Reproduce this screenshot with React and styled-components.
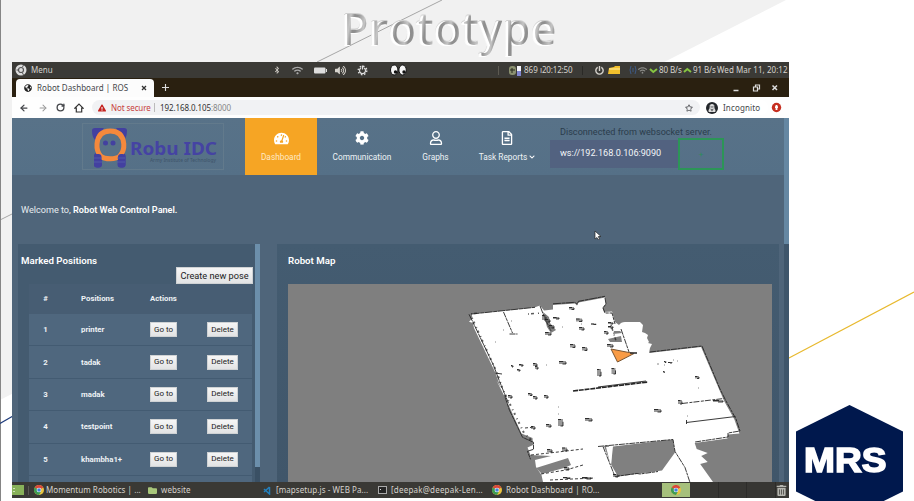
import React from "react";
import styled, { createGlobalStyle } from "styled-components";
import {
  FaTachometerAlt, FaCog, FaRegUser, FaRegFileAlt, FaChevronDown, FaChevronUp,
  FaBluetoothB, FaWifi, FaVolumeUp, FaPowerOff, FaFolder, FaGlobeAmericas,
  FaExclamationTriangle, FaUserSecret, FaTrashAlt, FaRegStar,
} from "react-icons/fa";
import { ArrowLeft, ArrowRight, RotateCw, House } from "lucide-react";

const Global = createGlobalStyle`
  html, body { margin: 0; width: 914px; height: 501px; overflow: hidden; background: #fff; }
  * { box-sizing: border-box; }
`;

const Slide = styled.main`
  position: relative;
  width: 914px;
  height: 501px;
  overflow: hidden;
  font-family: Roboto, sans-serif;
`;
const Backdrop = styled.svg`
  position: absolute;
  inset: 0;
`;
const SlideTitle = styled.h1`
  position: relative;
  margin: 0 0 0 343px;
  height: 62px;
  font: 400 44.5px/56px "Open Sans", sans-serif;
  letter-spacing: 2.5px;
  white-space: nowrap;
  width: max-content;
  transform: scaleX(${(p) => p.$stretch});
  transform-origin: left;
  color: transparent;
  background: repeating-linear-gradient(100deg, #8f8f8f 0 3px, #adadad 7px, #c6c6c6 11px, #8f8f8f 15px);
  background-clip: text;
  -webkit-background-clip: text;
  filter: drop-shadow(-1.5px 0 0 #fff) drop-shadow(-0.5px 1px 0.5px #fff) drop-shadow(0.7px -0.3px 0 #cfcfcf);
`;
const Screen = styled.section`
  position: relative;
  width: 777px;
  height: 436px;
  margin-left: 12px;
  display: flex;
  flex-direction: column;
  overflow: hidden;
  background: #4f657a;
`;

/* Desktop chrome */
const Bar = styled.div`
  display: flex;
  align-items: center;
  flex: none;
  height: ${(p) => p.$h}px;
  background: ${(p) => p.$bg};
  color: ${(p) => p.$color || "#d6d3cd"};
  font: 400 8px/1 "Noto Sans", sans-serif;
  padding-left: ${(p) => p.$pad || 0}px;
`;
const Slot = styled.span`
  display: flex;
  align-items: center;
  flex: none;
  width: ${(p) => p.$w}px;
  height: 100%;
  white-space: nowrap;
  letter-spacing: ${(p) => p.$ls || 0}px;
  color: ${(p) => p.$color || "inherit"};
`;
const Tab = styled.div`
  display: flex;
  align-items: center;
  align-self: flex-end;
  width: 138px;
  height: 18px;
  padding-left: 8px;
  border-radius: 4px 4px 0 0;
  background: #fcfcfc;
  color: #44464a;
`;
const AddressBar = styled.div`
  display: flex;
  align-items: center;
  width: 608px;
  height: 15px;
  padding-left: 6px;
  border-radius: 8px;
  background: #f1f2f4;
`;
const Divider = styled.i`
  flex: none;
  width: 1px;
  height: 9px;
  margin-right: ${(p) => p.$mr || 0}px;
  background: ${(p) => p.$color || "#bbb"};
`;
const IncognitoChip = styled.div`
  display: flex;
  align-items: center;
  width: 65px;
  height: 15px;
  margin-left: 3px;
  padding-left: 3px;
  gap: 5px;
  border-radius: 8px;
  background: #fff;
  color: #44464a;
  letter-spacing: 0.15px;
`;
const Disc = styled.span`
  display: grid;
  place-items: center;
  flex: none;
  width: ${(p) => p.$size}px;
  height: ${(p) => p.$size}px;
  border-radius: 50%;
  background: ${(p) => p.$bg};
  color: #ddd;
`;
const Workspace = styled.span`
  display: grid;
  place-items: center;
  flex: none;
  width: 28px;
  height: 14px;
  background: #a6c07c;
`;
const Cell = styled.span`
  flex: none;
  width: 28.6px;
  height: 16px;
  border-right: 1px solid #2c2b29;
  background: #373633;
`;

/* Web page */
const Viewport = styled.div`
  display: flex;
  height: 364px;
  flex: none;
`;
const Page = styled.div`
  width: 772px;
`;
const PageScroll = styled.div`
  width: 5px;
  background: linear-gradient(#6587a2 126px, #3f566b 126px);
`;
const Header = styled.header`
  display: flex;
  height: 57px;
  padding-left: 70px;
  background: linear-gradient(#587288, #557087);
`;
const Brand = styled.div`
  width: 142px;
  height: 47px;
  margin: 5px 21px 0 0;
  border: 1px solid #627a8c;
`;
const NavItem = styled.a`
  display: flex;
  flex-direction: column;
  align-items: center;
  width: ${(p) => p.$w}px;
  padding-top: 13px;
  background: ${(p) => (p.$active ? "#f6a524" : "transparent")};
  color: ${(p) => (p.$active ? "#ffe9c4" : "#eef3f6")};
  font-size: 8.3px;
  line-height: 12px;
  gap: ${(p) => (p.$active ? 5 : 6)}px;
  white-space: nowrap;
  svg { color: #fff; flex: none; }
`;
const NavLabel = styled.span`
  display: flex;
  align-items: center;
  gap: 2px;
`;
const Socket = styled.div`
  width: 180px;
  padding-top: 8px;
`;
const SocketStatus = styled.div`
  padding-left: 10px;
  font-size: 9.1px;
  line-height: 12px;
  color: #2b3d4c;
  white-space: nowrap;
`;
const SocketRow = styled.div`
  display: flex;
  align-items: center;
`;
const SocketInput = styled.div`
  width: 128px;
  height: 28px;
  padding-left: 10px;
  background: #526280;
  color: #f2f5f8;
  font-size: 9.1px;
  line-height: 27px;
`;
const SocketButton = styled.div`
  display: grid;
  place-items: center;
  width: 46px;
  height: 32px;
  border: 2px solid #2c9557;
  color: #2c8f57;
  font-size: 8px;
`;
const Welcome = styled.p`
  margin: 0;
  height: 69px;
  padding-left: 9px;
  font-size: 9.1px;
  line-height: 70px;
  color: #e8edf1;
  b { color: #fff; font-weight: 600; }
`;
const Panels = styled.div`
  display: flex;
  height: 238px;
  padding-left: 6px;
`;
const PositionsPanel = styled.section`
  width: 237px;
  overflow: hidden;
  background: #445b70;
`;
const PanelScroll = styled.div`
  width: 5px;
  margin-right: 17px;
  background: linear-gradient(#6c8fab 223px, #3a5064 223px);
`;
const PanelTitle = styled.h2`
  margin: 0;
  padding: ${(p) => p.$pad};
  font-size: 9.7px;
  line-height: 13px;
  font-weight: 600;
  color: #fff;
`;
const Button = styled.button`
  display: block;
  flex: none;
  width: ${(p) => p.$w}px;
  height: ${(p) => p.$h || 15}px;
  margin: ${(p) => p.$m || 0};
  padding: 0;
  border: 1px solid #cfd2d4;
  border-radius: 0;
  background: linear-gradient(#f6f6f6, #e2e3e4);
  color: #222;
  font: 400 ${(p) => p.$fs || 8}px/1 Roboto, sans-serif;
  white-space: nowrap;
`;
const Table = styled.div`
  width: 223px;
  margin-left: 11px;
`;
const Row = styled.div`
  display: grid;
  grid-template-columns: 36px 69px 57px 1fr;
  align-items: center;
  height: ${(p) => (p.$head ? 30 : 32.4)}px;
  padding-left: 16px;
  border-bottom: 1px solid ${(p) => (p.$head ? "#475d73" : "#435b72")};
  background: ${(p) => (p.$head ? "#475d73" : "#4f677e")};
  color: #eef2f5;
  font-size: 7.8px;
  font-weight: 700;
`;
const Index = styled.span`
  justify-self: start;
  width: 1px;
  display: flex;
  justify-content: center;
`;
const MapPanel = styled.section`
  width: 502px;
  background: linear-gradient(#445c71, #40566a);
`;
const MapCanvas = styled.svg`
  display: block;
  margin-left: 11px;
  background: #7f7f7f;
`;
const Cursor = styled.svg`
  position: absolute;
  left: 582px;
  top: 168px;
`;
const Company = styled.div`
  position: absolute;
  left: 796px;
  top: 405px;
  width: 107px;
  height: 113px;
  clip-path: polygon(50% 0, 100% 23.5%, 100% 76.5%, 50% 100%, 0 76.5%, 0 23.5%);
  background: #00184d;
`;
const CompanyName = styled.div`
  width: max-content;
  margin: 37px 0 0 8px;
  color: #fff;
  font: 700 35px/36px "Liberation Sans", sans-serif;
  -webkit-text-stroke: 1.6px #fff;
  transform: scaleX(1.06);
  transform-origin: left;
`;

const ChromeIcon = () => (
  <svg width="10" height="10" viewBox="0 0 20 20">
    <circle cx="10" cy="10" r="10" fill="#e9c33f" />
    <path d="M10 10L1.3 5A10 10 0 0 1 18.7 5z" fill="#d9483b" />
    <path d="M10 10L1.3 5A10 10 0 0 0 10 20l4-7z" fill="#3d9c54" />
    <circle cx="10" cy="10" r="4.7" fill="#fff" />
    <circle cx="10" cy="10" r="3.6" fill="#4280d8" />
  </svg>
);

const RobotLogo = () => (
  <svg width="140" height="45" viewBox="83 124 140 45">
    <g fill="#4340a0">
      <path d="M92 130.500q0-2.500 3-2.500h9l-9 12q-3-3-3-9.500zM127 130.500q0-2.500-3-2.500h-8l8 12q3-3 3-9.500z" />
      <rect x="94" y="153" width="8" height="14.500" rx="3" />
      <rect x="117.500" y="153" width="8" height="14.500" rx="3" />
    </g>
    <ellipse cx="110" cy="144.500" rx="11" ry="11.500" fill="#587288" />
    <path d="M100.500 156q-4-5-3.500-12 1-13 13.300-13t13.500 13q.5 7-4 12-3 2.800-9.500 2.800t-9.800-2.800z" fill="none" stroke="#f5893c" strokeWidth="5" />
    <g fill="#4340a0">
      <circle cx="105.500" cy="143" r="2.500" />
      <circle cx="113" cy="143" r="2.500" />
      <rect x="94" y="154" width="7.500" height="13.500" rx="3" />
      <rect x="118" y="154" width="7.500" height="13.500" rx="3" />
    </g>
    <path d="M94 158h8m-8 4h8m15-4h8m-8 4h8" stroke="#5a68ac" strokeWidth="0.700" />
    <text x="130" y="154.500" textLength="87" lengthAdjust="spacingAndGlyphs" fill="#4543a3" fontFamily="Noto Sans" fontWeight="700" fontSize="18.500">Robu IDC</text>
    <text x="150" y="162" textLength="66" lengthAdjust="spacingAndGlyphs" fill="#40566c" fontFamily="Noto Sans" fontWeight="500" fontSize="4.600">Army Institute of Technology</text>
  </svg>
);

const obstacles = [
  [542, 315, 4, 5], [545, 319, 5, 3], [549, 325, 5, 3], [553, 317, 6, 2], [545, 332, 6, 3],
  [569, 307, 5, 2.500], [576, 318.500, 6, 3], [579, 327, 5, 3], [591, 323.500, 5, 1],
  [604, 331, 4, 3], [608, 326, 5, 2], [608, 322, 5, 2], [570, 344, 5, 3.500], [582, 347, 5, 3.500],
  [607, 344, 6, 3], [533, 363, 4, 3], [535, 366, 3, 3], [519, 364, 4, 2], [517, 369, 3, 2],
  [511, 365, 2, 2], [559, 361, 7, 3], [597, 369, 4, 7], [611.500, 368, 4, 6], [695, 376, 4, 2.500],
  [664, 361, 2, 1.500], [668, 362, 4, 1], [663, 371, 1.500, 1.500], [508, 395, 4, 3],
  [528, 393, 4, 2.500], [533, 396, 4, 3], [544, 395, 4, 3], [531, 426, 4, 3], [546, 424, 5, 3],
  [558, 419, 5, 7], [585, 418, 7, 3], [654, 409, 7, 3], [678, 400, 4, 4], [713, 400, 10, 2],
  [547, 449, 5, 3], [562, 447.500, 5, 3.500], [564, 467, 5, 3], [582, 477, 9, 2],
  [563, 477, 7, 1.500], [613, 474, 5, 3],
];

const RobotMap = () => (
  <MapCanvas width="484" height="198" viewBox="288 284 484 198">
    <path fill="#fff" d="M471.700 314L535 307.300 540 305.500l4 5 9-1v-4.500l22-1.500 2 2 1.500-3 26.500-5 1 6-3.500 4 1.500 4.500 8-.4 3 10.500 4 3q2-3 6-3l15-.2 3 3-1 7 3 1 3 2-1 3 2 4-1 1 4 1-2 4-1 5.200 52.100-6 18.300 43 5 11.300 10 18 5 14-11.500 1 -.5 4-32.700 4.700 2 6 11 4-6.500 3 6.500 6-7.500 2L713 482H543l-1.500-7-5.500-8-1-7 16-4-20.500-1-3-7.500 5.500-2.500-.5-7-11-4.500-15-33-10-20L501 388l-6-16-21-44-1-5-4-1.300 3.500-3.500z" />
    <path fill="#808080" d="M613 446.500l60-7 2 13-13 18-44 6-7-12zM604 446l5-.5 2 19zM536 468l32-10 3 7-7 3-22 6zM543 312l6 5 1 6 6 7-5 3-4-6zM608 339l13-3 1 6h-12zM614 331h6l2 2-9 1z" />
    <path fill="#fff" d="M606 447l6-.5-1 20z" />
    <g fill="none" stroke="#252525" strokeWidth="0.900">
      <path strokeDasharray="8 .6 4 .4" d="M471.700 314L535 307.300m5-1.500l5 13 6 12m2-27l22-1.500 2 2 1.500-3 26.500-5m-136 18l3.500 7 21 44 6 16 9 22m-4-8l5 15 13 27 11 5v7l-6 2 3 8" />
      <path d="M503.500 312l9 21m-3 1h8M605 298l1 6-3 4 2 5 7 0 3 11m6 5l8 23M650 352l52-6 18 43 6 12 10 18 4 12-12 2v4l-33 5M598 446.500l75-7 2 12 10 16 5 15m-87-36l12 30 22-3 3 .5 18-2.500" strokeDasharray="6 .7 3 .8" />
      <path strokeWidth="1.600" strokeDasharray="5 .8" d="M573 391l75-9" />
      <path d="M598 387l48-6M495 373l7 1M686.500 420v4m0-1.500l49-6" />
      <path strokeDasharray="6 1.500 3 1" d="M682 403.500l42-5" />
      <path strokeDasharray="3 2" d="M531 455l18-2 9-1 25-3M541 474l25-4 17-5M550 480l45-2M525 428l10-1" />
      <path strokeWidth="2" strokeDasharray="1 3 2 4" opacity=".7" d="M472 318l25 55 6 17 21 43 9 9" />
      <path strokeWidth="1.500" strokeDasharray="1 2 3 4" opacity=".75" d="M611 325l6 19m-33-5M471 314l7-1m50 1l13-1" />
    </g>
    <path fill="none" d="M664 365h1m8-5h1m3 1h1m-21 3h2M503 330h1m-9 12h1m15-21h1m34 44h1m34-41h1m-20 3h1m-5 80h1m128 9h1m10-28h1m-141 26h1" stroke="#888" />
    {obstacles.map(([x, y, w, h]) => (
      <g key={`${x}-${y}`}>
        <rect x={x} y={y} width={w} height={h} fill="#555" opacity=".6" />
        <path d={`M${x} ${y + 0.5}h${w * 0.6}M${x + w} ${y + h * 0.4}v${h * 0.6}h${-w * 0.5}`} stroke="#111" fill="none" strokeWidth=".8" />
      </g>
    ))}
    <path d="M611 349l23 4.500-16.500 8.500z" fill="#f99b45" stroke="#785330" strokeWidth="1" />
    <path d="M630 353l7 0" stroke="#333" strokeWidth="1.600" />
  </MapCanvas>
);

const Eyes = () => (
  <svg width="17" height="12" viewBox="0 0 17 12">
    <ellipse cx="4.200" cy="6" rx="3.700" ry="5" fill="#f4f4f4" stroke="#111" />
    <ellipse cx="12.600" cy="6" rx="3.700" ry="5" fill="#f4f4f4" stroke="#111" />
    <circle cx="5.500" cy="8" r="1.700" fill="#111" />
    <circle cx="14" cy="8" r="1.700" fill="#111" />
  </svg>
);

const positions = ["printer", "tadak", "madak", "testpoint", "khambha1+"];

export default function App() {
  return (
    <Slide>
      <Global />
      <Backdrop width="914" height="501">
        <path d="M0 0h786L0 400z" fill="#f1f1f1" />
        <path d="M.5 0v501" stroke="#858585" />
        <path d="M442 0L317 62M13 213.500L1 219.500" stroke="#a6a6a6" />
        <path d="M914 292L788 358.500" stroke="#e8b92e" strokeWidth="1.200" />
        <path d="M13 416L0 423.500" stroke="#1f3c7c" strokeWidth="1.200" />
      </Backdrop>
      <SlideTitle $stretch={0.95}>Prototype</SlideTitle>
      <Screen>
        <Bar $h={16} $bg="#3b3a36" $pad={3}>
          <Slot $w={16}>
            <svg width="12" height="12" viewBox="0 0 12 12">
              <circle cx="6" cy="6" r="5.500" fill="#ddd" />
              <circle cx="6" cy="6" r="2.500" fill="none" stroke="#555" strokeWidth="1.200" />
              <path d="M1.500 6h2M7.500 3l1-2M7.500 9l1 2" stroke="#555" />
            </svg>
          </Slot>
          <Slot $w={242}>Menu</Slot>
          <Slot $w={19}><FaBluetoothB size={8} /></Slot>
          <Slot $w={22}><FaWifi size={11} color="#aaa" /></Slot>
          <Slot $w={21}>
            <svg width="13" height="7"><rect y=".5" width="11.500" height="6" rx="1" fill="#ddd" /><path d="M12.500 2v3" stroke="#ddd" /></svg>
          </Slot>
          <Slot $w={22}><FaVolumeUp size={11} /></Slot>
          <Slot $w={33}>
            <svg width="11" height="11" viewBox="-5.500 -5.500 11 11">
              <circle r="4.200" fill="none" stroke="#ddd" strokeWidth="1.600" strokeDasharray="1.500 1.800" />
              <path d="M-1.600-2.500A3 3 0 1 0 1.600-2.500M0-5v4" fill="none" stroke="#ddd" strokeWidth="1.200" />
            </svg>
          </Slot>
          <Slot $w={108}><Eyes /></Slot>
          <Slot $w={11}><Divider $color="#5d5a52" /></Slot>
          <Slot $w={15}>
            <svg width="12" height="11"><rect y="1" width="7" height="9" rx="3" fill="#8b9170" /><path d="M1 5h5M3 3v5" stroke="#26281d" /><rect x="8" y="1" width="4" height="10" fill="#f4f4fa" /><rect x="8" y="6" width="4" height="5" fill="#8187d0" /></svg>
          </Slot>
          <Slot $w={16}>869</Slot>
          <Slot $w={42} $ls={-0.15}>ı20:12:50</Slot>
          <Slot $w={13}><Divider $color="#2a2926" /></Slot>
          <Slot $w={13}><FaPowerOff size={9} /></Slot>
          <Slot $w={21}>
            <svg width="13" height="10"><path d="M0 9l1-6 5-1 1-1h5v8z" fill="#f1bf2c" /><path d="M1 4h11" stroke="#fff0a8" /></svg>
          </Slot>
          <Slot $w={9}>
            <svg width="8" height="10"><path d="M2 1q-2 4 0 8M6 1q2 4 0 8M4 3v4" fill="none" stroke="#3e5a86" /></svg>
          </Slot>
          <Slot $w={11}><FaWifi size={9} color="#8a8a86" /></Slot>
          <Slot $w={10}><svg width="9" height="7"><path d="M1 2l3.300 3L8 2" fill="none" stroke="#86c442" strokeWidth="2" /></svg></Slot>
          <Slot $w={24} $ls={-0.1}>80 B/s</Slot>
          <Slot $w={10}><svg width="9" height="7"><path d="M1 5l3.300-3L8 5" fill="none" stroke="#86c442" strokeWidth="2" /></svg></Slot>
          <Slot $w={24} $ls={-0.1}>91 B/s</Slot>
          <Slot $w={72} $ls={0.05}>Wed Mar 11, 20:12</Slot>
        </Bar>
        <Bar $h={19} $bg="#2a2010" $pad={4}>
          <Tab>
            <Slot $w={13}><FaGlobeAmericas size={8} color="#222" /></Slot>
            <Slot $w={104} $ls={0.05}>Robot Dashboard | ROS</Slot>
            <Slot $w={10}><svg width="6" height="6"><path d="M1 1l4 4M5 1L1 5" stroke="#333" strokeWidth="1.300" /></svg></Slot>
          </Tab>
          <Slot $w={572}><svg width="24" height="9"><path d="M8 4.500h7M11.500 1v7" stroke="#ddd" strokeWidth="1.100" /></svg></Slot>
          <Slot $w={18}><svg width="14" height="8"><path d="M12.500 6.500H7.500" stroke="#ddd" strokeWidth="1.500" /></svg></Slot>
          <Slot $w={19}><svg width="18" height="8"><path d="M9.500 3v4h4V3zM11.500 3V1h4v4h-2" fill="none" stroke="#ddd" strokeWidth="1.200" /></svg></Slot>
          <Slot $w={16}><svg width="16" height="8"><path d="M9.500 1.500l4.500 4.500M14 1.500L9.500 6" stroke="#ddd" strokeWidth="1.500" /></svg></Slot>
        </Bar>
        <Bar $h={21} $bg="#fefefe" $pad={7} $color="#44464a">
          <Slot $w={19}><ArrowLeft size={10} strokeWidth={3} /></Slot>
          <Slot $w={18}><ArrowRight size={10} strokeWidth={2.500} color="#999" /></Slot>
          <Slot $w={18}><RotateCw size={9} strokeWidth={3.500} /></Slot>
          <Slot $w={18}>
            <svg width="10" height="10" viewBox="0 0 10 10"><path d="M.8 5.200L5 1l4.200 4.200H7.700V9H2.300V5.200z" fill="none" stroke="#333" strokeWidth="1.200" /></svg>
          </Slot>
          <AddressBar>
            <Slot $w={13}><FaExclamationTriangle size={8} color="#c5221f" /></Slot>
            <Slot $w={43} $ls={-0.1} $color="#c8413d">Not secure</Slot>
            <Divider $mr={5} />
            <Slot $w={51} $ls={-0.1} $color="#333">192.168.0.105</Slot>
            <Slot $w={474} $ls={-0.1} $color="#888">:8000</Slot>
            <FaRegStar size={8} />
          </AddressBar>
          <IncognitoChip><Disc $size={12} $bg="#24272b"><FaUserSecret size={8} /></Disc>Incognito</IncognitoChip>
          <Slot $w={14}><svg width="14" height="11"><circle cx="8.500" cy="5.500" r="4.700" fill="#c62f20" /><path d="M8.500 3v5M7 5.200h3" stroke="#fff" strokeWidth="1.800" fill="none" /></svg></Slot>
        </Bar>
        <Viewport>
          <Page>
            <Header>
              <Brand><RobotLogo /></Brand>
              <NavItem $w={72} $active><FaTachometerAlt size={15} />Dashboard</NavItem>
              <NavItem $w={90}><FaCog size={14} />Communication</NavItem>
              <NavItem $w={57}><FaRegUser size={14} />Graphs</NavItem>
              <NavItem $w={86}><FaRegFileAlt size={14} /><NavLabel>Task Reports<FaChevronDown size={6} /></NavLabel></NavItem>
              <Socket>
                <SocketStatus>Disconnected from websocket server.</SocketStatus>
                <SocketRow><SocketInput>ws://192.168.0.106:9090</SocketInput><SocketButton>+</SocketButton></SocketRow>
              </Socket>
            </Header>
            <Welcome>Welcome to, <b>Robot Web Control Panel.</b></Welcome>
            <Panels>
              <PositionsPanel>
                <PanelTitle $pad="10px 0 0 3px">Marked Positions</PanelTitle>
                <Button $w={77} $h={17} $fs={9.2} $m="0 0 0 158px">Create new pose</Button>
                <Table>
                  <Row $head><Index>#</Index><span>Positions</span><span>Actions</span></Row>
                  {positions.map((name, i) => (
                    <Row key={name}>
                      <Index>{i + 1}</Index>
                      <span>{name}</span>
                      <Button $w={27}>Go to</Button>
                      <Button $w={31}>Delete</Button>
                    </Row>
                  ))}
                  <Row />
                </Table>
              </PositionsPanel>
              <PanelScroll />
              <MapPanel>
                <PanelTitle $pad="10px 0 17px 11px">Robot Map</PanelTitle>
                <RobotMap />
              </MapPanel>
            </Panels>
          </Page>
          <PageScroll />
        </Viewport>
        <Bar $h={16} $bg="#3a3935">
          <Slot $w={16}><svg width="12" height="10"><rect width="12" height="10" fill="#88b159" /><path d="M2 3v1m0 2v1" stroke="#e9f4d8" strokeWidth="1.500" /></svg></Slot>
          <Slot $w={6}><Divider $color="#5b5953" /></Slot>
          <Slot $w={12}><ChromeIcon /></Slot>
          <Slot $w={102} $ls={0.05}>Momentum Robotics | ...</Slot>
          <Slot $w={13}><FaFolder size={9} color="#a9c77b" /></Slot>
          <Slot $w={102} $ls={0.1}>website</Slot>
          <Slot $w={13}><svg width="8" height="9"><path d="M6.500 1L1 6m0-3l5.500 5V1" fill="none" stroke="#2480bd" strokeWidth="1.500" /></svg></Slot>
          <Slot $w={102} $ls={0.08}>[mapsetup.js - WEB Pa...</Slot>
          <Slot $w={13}><svg width="9" height="8"><rect x=".5" y=".5" width="8" height="7" fill="#252525" stroke="#aaa" /><path d="M2 3l1 1" stroke="#ddd" /></svg></Slot>
          <Slot $w={101} $ls={0.2}>[deepak@deepak-Len...</Slot>
          <Slot $w={14}><ChromeIcon /></Slot>
          <Slot $w={156} $ls={0.07}>Robot Dashboard | RO...</Slot>
          <Workspace><ChromeIcon /></Workspace>
          <Cell /><Cell /><Cell />
          <FaTrashAlt size={11} color="#b5b5ae" />
        </Bar>
        <Cursor width="8" height="12" viewBox="0 0 8 12"><path d="M1 1v8l2-1.500L4.500 10l1-1L4.300 6.500H7z" fill="#fff" stroke="#222" strokeWidth=".7" /></Cursor>
      </Screen>
      <Company><CompanyName>MRS</CompanyName></Company>
    </Slide>
  );
}
